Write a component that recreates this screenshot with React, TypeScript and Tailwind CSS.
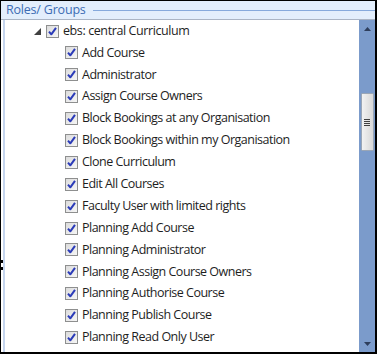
import React from "react";

const items = [
  "Add Course",
  "Administrator",
  "Assign Course Owners",
  "Block Bookings at any Organisation",
  "Block Bookings within my Organisation",
  "Clone Curriculum",
  "Edit All Courses",
  "Faculty User with limited rights",
  "Planning Add Course",
  "Planning Administrator",
  "Planning Assign Course Owners",
  "Planning Authorise Course",
  "Planning Publish Course",
  "Planning Read Only User",
];

function Check() {
  return (
    <span className="flex h-[13px] w-[13px] shrink-0 items-center justify-center border border-[#8e8f8f] bg-gradient-to-br from-[#dcdcdc] to-[#f6f6f6]">
      <svg width="11" height="11" viewBox="0 0 11 11">
        <path d="M2 5.6 L4.3 8.3 L9 1.8" fill="none" stroke="#2b3bb8" strokeWidth="2" strokeLinejoin="round" />
      </svg>
    </span>
  );
}

export default function App() {
  return (
    <div
      className="relative flex h-[354px] w-[377px] flex-col overflow-hidden border-t border-l border-b-2 border-r-2 border-black bg-white text-[#1e1e1e]"
      style={{ fontFamily: '"Open Sans", "Noto Sans", sans-serif' }}
    >
      <div className="flex h-[19px] shrink-0 items-center border-b border-[#aab4c4] bg-[#e3eefc] pl-[5px]">
        <span className="text-[12.5px] leading-none tracking-[-0.2px] text-[#3c6cb4]">Roles/ Groups</span>
        <div className="ml-[7px] h-px flex-1 bg-[#86a9dc]" />
      </div>
      <div className="flex min-h-0 flex-1">
        <div className="ml-[2px] w-[2px] shrink-0 bg-[#c5d5ee]" />
        <div className="min-w-0 flex-1 overflow-hidden pt-[1px]">
          <div className="flex h-[21px] items-center">
            <svg className="ml-[29px] mr-[5px]" width="7" height="7" viewBox="0 0 7 7">
              <path d="M7 0 L7 7 L0 7 Z" fill="#404040" />
            </svg>
            <Check />
            <span className="ml-[4px] text-[12.5px] leading-none tracking-[-0.4px]">ebs: central Curriculum</span>
          </div>
          {items.map((t) => (
            <div key={t} className="flex h-[21.9px] items-center pl-[60px]">
              <Check />
              <span className="ml-[4px] whitespace-nowrap text-[12.5px] leading-none tracking-[-0.5px]">{t}</span>
            </div>
          ))}
          <div className="flex h-[21.9px] items-center pl-[60px]">
            <Check />
          </div>
        </div>
        <div className="flex w-[16px] shrink-0 flex-col items-center bg-[#7b9bcb]">
          <svg className="mt-[7px]" width="7" height="4" viewBox="0 0 7 4">
            <path d="M3.5 0 L7 4 L0 4 Z" fill="#2e3e5c" />
          </svg>
          <div className="mt-[62px] flex h-[58px] w-[13px] items-center justify-center rounded-[1px] border border-[#9aa6b6] bg-gradient-to-r from-[#f2f2f2] to-[#d8d8d8]">
            <div className="flex flex-col gap-[1px]">
              <div className="h-px w-[6px] bg-[#404040]" />
              <div className="h-px w-[6px] bg-[#404040]" />
              <div className="h-px w-[6px] bg-[#404040]" />
              <div className="h-px w-[6px] bg-[#404040]" />
            </div>
          </div>
          <div className="flex-1" />
          <svg className="mb-[6px]" width="7" height="4" viewBox="0 0 7 4">
            <path d="M0 0 L7 0 L3.5 4 Z" fill="#2e3e5c" />
          </svg>
        </div>
      </div>
      <svg className="absolute left-0 top-[258px]" width="3" height="12" viewBox="0 0 3 12">
        <rect x="0" y="1" width="2" height="3" fill="#000" />
        <rect x="0" y="8" width="2" height="3" fill="#000" />
      </svg>
    </div>
  );
}
